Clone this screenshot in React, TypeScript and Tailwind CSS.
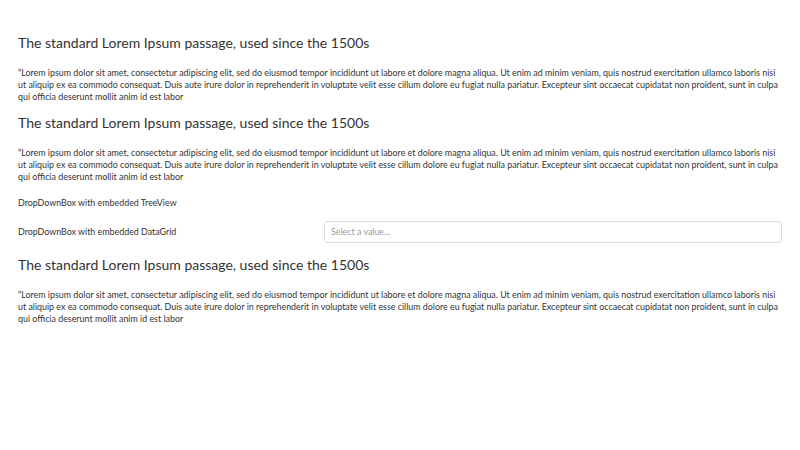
import React from "react";

const LOREM =
  "\u201cLorem ipsum dolor sit amet, consectetur adipiscing elit, sed do eiusmod tempor incididunt ut labore et dolore magna aliqua. Ut enim ad minim veniam, quis nostrud exercitation ullamco laboris nisi ut aliquip ex ea commodo consequat. Duis aute irure dolor in reprehenderit in voluptate velit esse cillum dolore eu fugiat nulla pariatur. Excepteur sint occaecat cupidatat non proident, sunt in culpa qui officia deserunt mollit anim id est labor";

function Passage() {
  return (
    <section>
      <h2 className="text-[14px] leading-[20px] text-[#333] mb-[14px]">
        The standard Lorem Ipsum passage, used since the 1500s
      </h2>
      <p className="text-[8.9px] leading-[12px] text-[#333]">{LOREM}</p>
    </section>
  );
}

export default function App() {
  return (
    <div
      className="w-[800px] h-[450px] bg-white px-[18px] pt-[33px]"
      style={{ fontFamily: 'Lato, "Noto Sans", sans-serif' }}
    >
      <Passage />
      <div className="mt-[10px]">
        <Passage />
      </div>
      <div className="mt-[9px] flex flex-col gap-[7px] text-[8.9px] text-[#333]">
        <div className="h-[22px] flex items-center">DropDownBox with embedded TreeView</div>
        <div className="flex items-center">
          <div className="w-[306px]">DropDownBox with embedded DataGrid</div>
          <div className="flex-1 h-[22px] border border-[#ddd] rounded-[3px] flex items-center px-[6px] text-[#999]">
            Select a value...
          </div>
        </div>
      </div>
      <div className="mt-[12px]">
        <Passage />
      </div>
    </div>
  );
}
